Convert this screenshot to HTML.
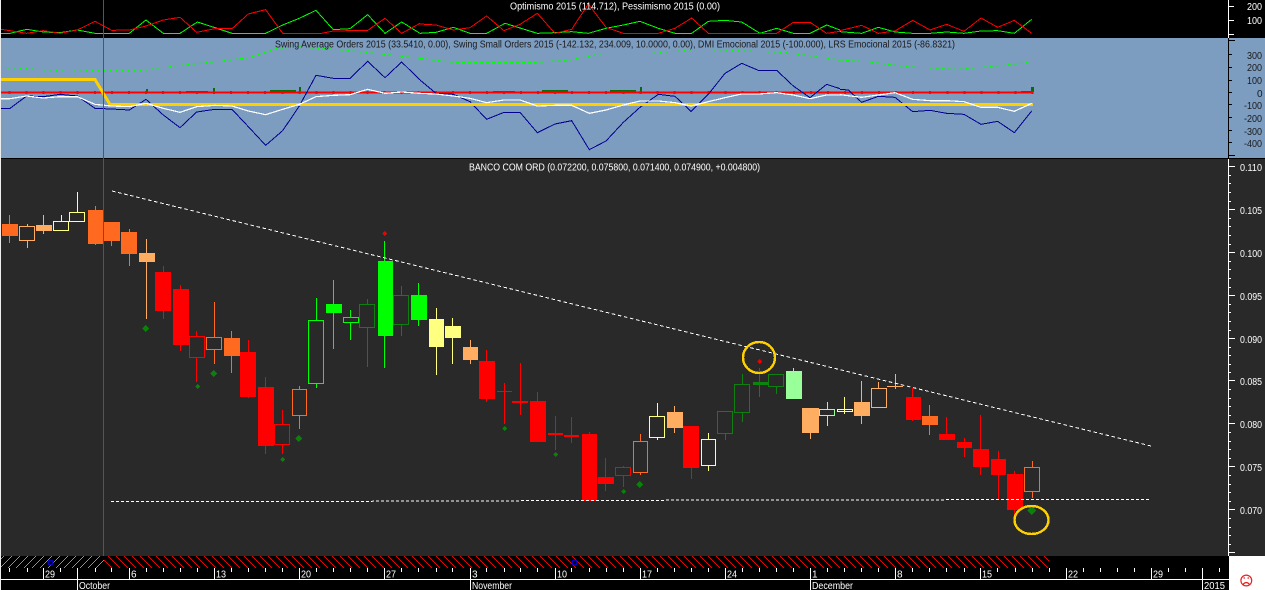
<!DOCTYPE html>
<html lang="pt">
<head>
<meta charset="utf-8">
<title>BANCO COM ORD</title>
<style>
html,body{margin:0;padding:0;background:#000;width:1265px;height:590px;overflow:hidden}
svg{display:block}
text{font-family:"Liberation Sans",sans-serif;font-size:10px}
.c{shape-rendering:crispEdges}
.w text{fill:#fff}
.k text{fill:#1a1a1a}
</style>
</head>
<body>
<svg width="1265" height="590" viewBox="0 0 1265 590" xmlns="http://www.w3.org/2000/svg">
<defs>
<pattern id="hr" width="8" height="8" patternUnits="userSpaceOnUse"><path class="c" d="M0 0h1v1h-1zM1 1h1v1h-1zM2 2h1v1h-1zM3 3h1v1h-1zM4 4h1v1h-1zM5 5h1v1h-1zM6 6h1v1h-1zM7 7h1v1h-1z" fill="#f00000"/></pattern>
<pattern id="hg" width="8" height="8" patternUnits="userSpaceOnUse"><path class="c" d="M7 0h1v1h-1zM6 1h1v1h-1zM5 2h1v1h-1zM4 3h1v1h-1zM3 4h1v1h-1zM2 5h1v1h-1zM1 6h1v1h-1zM0 7h1v1h-1z" fill="#20e020"/></pattern>
</defs>

<!-- panels -->
<g class="c">
<rect x="0" y="0" width="1265" height="38" fill="#000"/>
<rect x="0" y="38" width="1265" height="120" fill="#7c9cc0"/>
<rect x="0" y="158" width="1265" height="1" fill="#000"/>
<rect x="0" y="159" width="1265" height="397" fill="#292929"/>
<rect x="0" y="556" width="1229" height="34" fill="#000"/>
<rect x="1229" y="556" width="36" height="34" fill="#fff"/>
<rect x="1" y="556" width="103" height="12" fill="url(#hg)"/>
<rect x="104" y="556" width="945" height="12" fill="url(#hr)"/>
</g>

<!-- top panel lines -->
<g class="c" fill="none" stroke-width="3">
<g transform="scale(.33333)">
<polyline stroke="#00ff00" points="3,100 30,100 80,88 130,96 180,98 232,90 285,100 335,100 388,100 438,60 490,100 540,100 592,66 645,83 696,100 745,100 797,100 848,75 898,55 948,31 1000,89 1050,86 1103,44 1155,100 1205,66 1260,100"/>
<polyline stroke="#ff0000" points="3,88 30,92 80,100 130,92 180,100 232,90 285,64 335,91 388,90 438,78 490,60 540,52 590,97 645,86 696,86 745,42 797,29 848,100 898,100 965,100 1000,93 1050,92 1103,91 1155,55 1205,100 1260,70"/>
</g>
<g transform="translate(420,0) scale(.33333)">
<polyline stroke="#00ff00" points="0,100 48,97 100,82 150,100 200,100 255,70 300,84 352,100 405,98 455,95 505,100 558,85 610,75 660,64 715,85 765,100 815,100 865,64 915,61 965,66 1020,100 1070,85 1120,100 1170,100 1220,75 1260,90"/>
<polyline stroke="#ff0000" points="0,72 48,75 100,90 150,83 200,48 252,92 300,73 352,40 405,100 455,88 505,12 558,82 610,100 715,100 765,85 815,54 865,100 915,100 1020,100 1070,100 1120,67 1170,67 1220,100 1260,94"/>
</g>
<g transform="translate(840,0) scale(.33333)">
<polyline stroke="#00ff00" points="0,95 65,100 115,82 165,96 218,100 270,100 320,96 372,100 423,93 473,92 523,100 575,58"/>
<polyline stroke="#ff0000" points="0,92 65,76 115,100 165,93 218,61 270,90 320,73 372,94 423,54 473,82 523,61 575,100"/>
</g>
</g>

<!-- middle panel lines -->
<g class="c" fill="none">
<g stroke="#00ff00" stroke-width="3" stroke-dasharray="9 9">
<polyline transform="scale(.33333)" points="3,203 100,207 200,214 285,211 430,211 530,197 650,185 750,172 830,145 900,141 1000,148 1100,157 1260,175"/>
<polyline transform="translate(420,0) scale(.33333)" points="0,175 100,187 350,187 450,180 550,160 700,160 830,148 960,152 1100,158 1260,180"/>
<polyline transform="translate(840,0) scale(.33333)" points="0,180 80,185 200,200 350,208 470,198 575,186"/>
</g>
<path d="M146 89h2v3h-2zM186 91h22v1h-22zM213 88h2v4h-2zM270 90h26v2h-26zM299 87h2v5h-2zM493 91h22v1h-22zM542 90h26v2h-26zM610 90h26v2h-26zM640 87h2v5h-2zM747 92h26v1h-26zM1021 91h12v1h-12zM1031 87h3v5h-3zM801 92h-4v1h4z" fill="#0b6b0b" stroke="none"/>
<path d="M1 92.5H1033" stroke="#ff0000" stroke-width="1.6"/>
<path d="M8.5 92.5H1034" stroke="#ff0000" stroke-width="3" stroke-dasharray="2 15.05"/>
<g stroke="#000090" stroke-width="3">
<polyline transform="scale(.33333)" points="3,325 30,325 80,288 130,290 180,283 232,288 285,325 335,327 388,330 438,298 490,345 540,383 590,336 645,328 696,328 745,380 797,436 848,392 898,318 948,226 1000,235 1050,235 1103,184 1155,233 1205,186 1260,240"/>
<polyline transform="translate(420,0) scale(.33333)" points="0,240 48,280 100,283 150,305 200,358 252,337 300,337 352,398 405,372 455,362 508,449 558,423 610,367 660,322 715,283 765,289 813,334 865,283 915,220 965,190 1015,211 1070,211 1120,258 1170,293 1220,253 1260,266"/>
<polyline transform="translate(840,0) scale(.33333)" points="0,268 25,270 65,307 115,289 165,292 218,335 270,331 320,340 372,343 423,373 473,364 523,398 575,333"/>
</g>
<path d="M1 79.5H95L110 104.5H1033" stroke="#ffd000" stroke-width="3"/>
<g stroke="#ffffff" stroke-width="3.6">
<polyline transform="scale(.33333)" points="3,296 30,296 80,288 130,294 180,290 232,290 285,313 335,318 388,320 438,310 490,325 540,337 590,320 645,316 696,318 745,333 797,344 848,328 898,313 948,290 1000,286 1050,284 1103,268 1155,280 1205,276 1260,280"/>
<polyline transform="translate(420,0) scale(.33333)" points="0,280 48,282 100,288 150,295 200,308 252,300 300,300 352,318 405,316 455,316 508,340 558,330 610,315 660,303 715,303 765,308 813,318 865,305 915,293 965,282 1015,282 1070,278 1120,285 1170,296 1220,285 1260,285"/>
<polyline transform="translate(840,0) scale(.33333)" points="0,284 65,292 115,285 165,278 218,298 270,302 320,302 372,305 423,322 473,322 523,334 575,310"/>
</g>
</g>

<!-- candles -->
<g class="c" fill="none" stroke-width="1">
<g stroke="#ff6a20">
<path d="M9.5 215V243M95.5 206V245M111.5 222V246M129.5 229V266M214.5 302V337M214.5 350V364M231.5 331V373M299.5 386V389M299.5 416V429M640.5 434V441M640.5 473V475M929.5 405V435M1032.5 461V467M1032.5 492V498"/>
<path d="M206.5 337.5H221.5V349.5H206.5ZM292.5 389.5H306.5V415.5H292.5ZM633.5 441.5H647.5V472.5H633.5ZM1024.5 467.5H1039.5V491.5H1024.5Z"/>
<path fill="#ff6a20" stroke="none" d="M2 224H18V236H2ZM88 210H103V244H88ZM104 222H120V241H104ZM121 232H137V254H121ZM224 338H240V356H224ZM922 416H938V425H922Z"/>
</g>
<g stroke="#ffad60">
<path d="M27.5 224V226M27.5 241V248M43.5 215V234M146.5 239V319M470.5 340V364M674.5 406V433M810.5 408V439M861.5 381V424M878.5 382V389M895.5 374V389M887 386.5H903"/>
<path d="M19.5 226.5H34.5V240.5H19.5ZM871.5 388.5H886.5V407.5H871.5Z"/>
<path fill="#ffad60" stroke="none" d="M36 225H52V231H36ZM139 253H155V262H139ZM463 347H478V360H463ZM667 412H683V428H667ZM802 408H819V433H802ZM854 402H870V416H854Z"/>
</g>
<g stroke="#ffff80">
<path d="M61.5 215V221M77.5 192V212M436.5 308V375M452.5 318V364M657.5 403V416M657.5 438V440M708.5 433V439M708.5 466V471M844.5 397V414"/>
<path d="M53.5 221.5H68.5V230.5H53.5ZM69.5 212.5H84.5V221.5H69.5ZM649.5 416.5H664.5V437.5H649.5ZM701.5 439.5H715.5V465.5H701.5ZM837.5 409.5H852.5V411.5H837.5Z"/>
<path fill="#ffff80" stroke="none" d="M429 319H444V347H429ZM445 326H461V338H445Z"/>
</g>
<g stroke="#ff0000">
<path d="M163.5 266V319M180.5 285V351M196.5 331V336M196.5 358V382M248.5 340V398M265.5 377V454M282.5 410V424M282.5 445V454M486.5 350V402M504.5 383V424M520.5 363V415M537.5 392V442M555.5 416V450M571.5 417V443M589.5 432V501M605.5 458V491M623.5 466V467M623.5 476V487M691.5 426V479M912.5 388V421M946.5 417V440M964.5 438V457M980.5 415V475M998.5 451V499M1014.5 471V517M497 391.5H512"/>
<path d="M189.5 336.5H204.5V357.5H189.5ZM274.5 424.5H289.5V444.5H274.5ZM615.5 467.5H630.5V475.5H615.5Z"/>
<path fill="#ff0000" stroke="none" d="M155 272H171V311H155ZM173 289H189V345H173ZM240 352H256V397H240ZM258 387H274V446H258ZM479 361H495V399H479ZM512 401H528V403H512ZM530 401H546V442H530ZM548 433H563V435H548ZM564 435H579V437H564ZM582 434H597V501H582ZM598 477H614V484H598ZM683 426H699V468H683ZM906 397H921V420H906ZM939 434H955V440H939ZM957 442H972V448H957ZM973 449H989V467H973ZM991 459H1006V475H991ZM1007 474H1023V510H1007Z"/>
</g>
<g stroke="#00ff00">
<path d="M316.5 298V320M316.5 384V388M333.5 280V349M350.5 310V317M350.5 323V340M384.5 241V368M418.5 283V326"/>
<path d="M308.5 320.5H323.5V383.5H308.5ZM343.5 317.5H358.5V322.5H343.5Z"/>
<path fill="#00ff00" stroke="none" d="M326 304H342V313H326ZM378 261H393V336H378ZM411 295H427V320H411Z"/>
</g>
<g stroke="#0f7f0f">
<path d="M367.5 299V304M367.5 328V367M401.5 286V295M401.5 325V336M725.5 434V440M742.5 374V384M742.5 413V422M759.5 368V397M776.5 387V394"/>
<path d="M359.5 304.5H374.5V327.5H359.5ZM393.5 295.5H408.5V324.5H393.5ZM717.5 411.5H732.5V433.5H717.5ZM734.5 384.5H749.5V412.5H734.5ZM768.5 374.5H783.5V386.5H768.5Z"/>
<path fill="#0b860b" stroke="none" d="M753 382H769V385H753Z"/>
</g>
<g stroke="#99ff99">
<path d="M793.5 368V371M827.5 402V409M827.5 416V426"/>
<path d="M819.5 409.5H834.5V415.5H819.5Z"/>
<path fill="#99ff99" stroke="none" d="M786 371H802V399H786Z"/>
</g>
</g>

<!-- diamonds -->
<g class="c" fill="#0a820a">
<path d="M145.5 325L149 328.5L145.5 332L142 328.5Z"/>
<path d="M197.5 384L200 386.5L197.5 389L195 386.5Z"/>
<path d="M213.5 370L217 373.5L213.5 377L210 373.5Z"/>
<path d="M282.5 457L285 459.5L282.5 462L280 459.5Z"/>
<path d="M298.5 435L302 438.5L298.5 442L295 438.5Z"/>
<path d="M504.5 426L507 428.5L504.5 431L502 428.5Z"/>
<path d="M555.5 452L558 454.5L555.5 457L553 454.5Z"/>
<path d="M623.5 489L626 491.5L623.5 494L621 491.5Z"/>
<path d="M639.5 481L643 484.5L639.5 488L636 484.5Z"/>
<path d="M1031.5 506L1036 510.5L1031.5 515L1027 510.5Z"/>
<path fill="#f00000" d="M384.5 231L387 233.5L384.5 236L382 233.5Z"/>
<path fill="#f00000" d="M759.5 359L762 361.5L759.5 364L757 361.5Z"/>
</g>

<!-- trend lines -->
<g class="c" fill="none" stroke="#fff" stroke-width="1">
<path d="M112 191L1151 446" stroke-dasharray="3.6 2.6"/>
<path d="M111 501.5H300L740 500L1151 499.5" stroke-dasharray="3 2"/>
</g>

<!-- circles -->
<g class="c" fill="none" stroke="#ffd000" stroke-width="2.4">
<ellipse cx="759" cy="357.5" rx="16" ry="15.5"/>
<ellipse cx="1031.5" cy="520" rx="17" ry="14"/>
</g>

<!-- crosshair -->
<rect class="c" x="103" y="0" width="1" height="556" fill="#d02020"/>
<rect class="c" x="0" y="0" width="1" height="590" fill="#eeeeee"/>

<!-- hatch circles -->
<g fill="none" stroke="#0000e0" stroke-width="1.4">
<circle cx="50.5" cy="562.5" r="2.4"/>
<circle cx="574.5" cy="562.5" r="2.4"/>
</g>

<!-- axes -->
<g class="c">
<rect x="1228" y="0" width="1" height="38" fill="#fff"/>
<path d="M1228 6.5h6M1228 20.5h6M1228 34.5h6" stroke="#fff" fill="none"/>
<rect x="1228" y="38" width="1" height="121" fill="#000"/>
<path d="M1228 40.5h7M1228 54.5h4M1228 67.5h4M1228 80.5h4M1228 92.5h4M1228 104.5h4M1228 117.5h4M1228 130.5h4M1228 142.5h4M1228 155.5h7" stroke="#000" fill="none"/>
<rect x="1228" y="159" width="1" height="397" fill="#fff"/>
<path d="M1228 166.5h7M1228 209.5h7M1228 252.5h7M1228 295.5h7M1228 338.5h7M1228 380.5h7M1228 423.5h7M1228 466.5h7M1228 509.5h7M1228 552.5h7" stroke="#fff" fill="none"/>
<path d="M1228 175.5h3M1228 183.5h3M1228 192.5h3M1228 201.5h3M1228 218.5h3M1228 226.5h3M1228 235.5h3M1228 244.5h3M1228 261.5h3M1228 269.5h3M1228 278.5h3M1228 287.5h3M1228 304.5h3M1228 312.5h3M1228 321.5h3M1228 330.5h3M1228 347.5h3M1228 355.5h3M1228 364.5h3M1228 372.5h3M1228 389.5h3M1228 398.5h3M1228 406.5h3M1228 415.5h3M1228 432.5h3M1228 441.5h3M1228 449.5h3M1228 458.5h3M1228 475.5h3M1228 484.5h3M1228 492.5h3M1228 501.5h3M1228 518.5h3M1228 527.5h3M1228 535.5h3M1228 544.5h3" stroke="#fff" fill="none"/>
<!-- time axis -->
<rect x="1" y="579" width="1228" height="1" fill="#fff"/>
<path d="M43.5 568V579M129.5 568V579M214.5 568V579M299.5 568V579M384.5 568V579M555.5 568V579M640.5 568V579M725.5 568V579M895.5 568V579M980.5 568V579M1066.5 568V579M1151.5 568V579M77.5 568V590M470.5 568V590M810.5 568V590M1202.5 568V590" stroke="#fff" fill="none"/>
<path d="M9.5 568v4M27.5 568v4M60.5 568v4M95.5 568v4M111.5 568v4M146.5 568v4M163.5 568v4M180.5 568v4M197.5 568v4M231.5 568v4M248.5 568v4M265.5 568v4M282.5 568v4M316.5 568v4M333.5 568v4M350.5 568v4M367.5 568v4M401.5 568v4M418.5 568v4M436.5 568v4M452.5 568v4M486.5 568v4M504.5 568v4M520.5 568v4M537.5 568v4M571.5 568v4M589.5 568v4M606.5 568v4M623.5 568v4M657.5 568v4M674.5 568v4M691.5 568v4M708.5 568v4M742.5 568v4M759.5 568v4M776.5 568v4M793.5 568v4M827.5 568v4M844.5 568v4M861.5 568v4M878.5 568v4M912.5 568v4M929.5 568v4M946.5 568v4M964.5 568v4M997.5 568v4M1015.5 568v4M1032.5 568v4M1049.5 568v4M1083.5 568v4M1100.5 568v4M1117.5 568v4M1134.5 568v4M1168.5 568v4M1185.5 568v4M1219.5 568v4" stroke="#fff" fill="none"/>
</g>

<!-- sad face -->
<g fill="none" stroke="#ee2020" stroke-width="1.2">
<circle cx="1246.3" cy="580.5" r="5.4"/>
<path d="M1243 584.5Q1246.3 580.5 1249.6 584.5"/>
<path d="M1243.5 578h1.5M1247.5 578h1.5"/>
</g>

<!-- titles -->
<g class="w">
<text x="510" y="9.5" textLength="210" lengthAdjust="spacingAndGlyphs">Optimismo 2015 (114.712), Pessimismo 2015 (0.00)</text>
<text x="469" y="170.5" textLength="291" lengthAdjust="spacingAndGlyphs">BANCO COM ORD (0.072200, 0.075800, 0.071400, 0.074900, +0.004800)</text>
<text x="1247" y="10" textLength="15" lengthAdjust="spacingAndGlyphs">200</text>
<text x="1247" y="24" textLength="15" lengthAdjust="spacingAndGlyphs">100</text>
<text x="1240" y="171" textLength="22" lengthAdjust="spacingAndGlyphs">0.110</text>
<text x="1240" y="214" textLength="22" lengthAdjust="spacingAndGlyphs">0.105</text>
<text x="1240" y="257" textLength="22" lengthAdjust="spacingAndGlyphs">0.100</text>
<text x="1240" y="300" textLength="22" lengthAdjust="spacingAndGlyphs">0.095</text>
<text x="1240" y="343" textLength="22" lengthAdjust="spacingAndGlyphs">0.090</text>
<text x="1240" y="385" textLength="22" lengthAdjust="spacingAndGlyphs">0.085</text>
<text x="1240" y="428" textLength="22" lengthAdjust="spacingAndGlyphs">0.080</text>
<text x="1240" y="471" textLength="22" lengthAdjust="spacingAndGlyphs">0.075</text>
<text x="1240" y="514" textLength="22" lengthAdjust="spacingAndGlyphs">0.070</text>
<text x="45" y="577.5" textLength="10" lengthAdjust="spacingAndGlyphs">29</text>
<text x="131" y="577.5">6</text>
<text x="216" y="577.5" textLength="10" lengthAdjust="spacingAndGlyphs">13</text>
<text x="301" y="577.5" textLength="10" lengthAdjust="spacingAndGlyphs">20</text>
<text x="386" y="577.5" textLength="10" lengthAdjust="spacingAndGlyphs">27</text>
<text x="472" y="577.5">3</text>
<text x="557" y="577.5" textLength="10" lengthAdjust="spacingAndGlyphs">10</text>
<text x="642" y="577.5" textLength="10" lengthAdjust="spacingAndGlyphs">17</text>
<text x="727" y="577.5" textLength="10" lengthAdjust="spacingAndGlyphs">24</text>
<text x="812" y="577.5">1</text>
<text x="897" y="577.5">8</text>
<text x="982" y="577.5" textLength="10" lengthAdjust="spacingAndGlyphs">15</text>
<text x="1068" y="577.5" textLength="10" lengthAdjust="spacingAndGlyphs">22</text>
<text x="1153" y="577.5" textLength="10" lengthAdjust="spacingAndGlyphs">29</text>
<text x="79" y="589" textLength="31" lengthAdjust="spacingAndGlyphs">October</text>
<text x="472" y="589" textLength="40" lengthAdjust="spacingAndGlyphs">November</text>
<text x="812" y="589" textLength="41" lengthAdjust="spacingAndGlyphs">December</text>
<text x="1204" y="589" textLength="21" lengthAdjust="spacingAndGlyphs">2015</text>
</g>
<g class="k">
<text x="275" y="47.5" textLength="680" lengthAdjust="spacingAndGlyphs">Swing Average Orders 2015 (33.5410, 0.00), Swing Small Orders 2015 (-142.132, 234.009, 10.0000, 0.00), DMI Emocional 2015 (-100.000), LRS Emocional 2015 (-86.8321)</text>
<text x="1247" y="59" textLength="15" lengthAdjust="spacingAndGlyphs">300</text>
<text x="1247" y="71" textLength="15" lengthAdjust="spacingAndGlyphs">200</text>
<text x="1247" y="84" textLength="15" lengthAdjust="spacingAndGlyphs">100</text>
<text x="1257" y="97">0</text>
<text x="1244" y="109" textLength="18" lengthAdjust="spacingAndGlyphs">-100</text>
<text x="1244" y="122" textLength="18" lengthAdjust="spacingAndGlyphs">-200</text>
<text x="1244" y="135" textLength="18" lengthAdjust="spacingAndGlyphs">-300</text>
<text x="1244" y="147" textLength="18" lengthAdjust="spacingAndGlyphs">-400</text>
</g>
</svg>
</body>
</html>
